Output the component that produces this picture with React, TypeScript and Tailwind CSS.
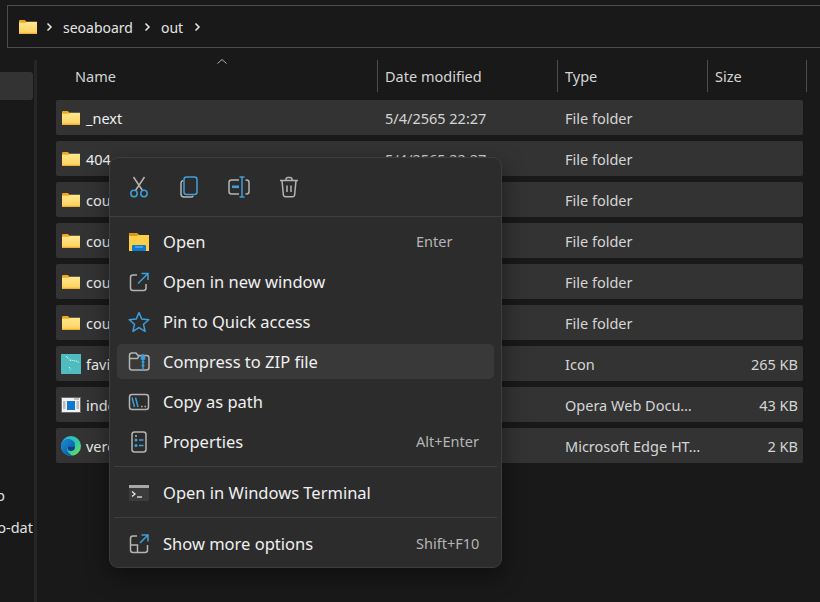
import type { ReactNode } from "react";

const BLUE = "#3f9fd8";
const GREY = "#b4b4b4";

function Folder() {
  return (
    <svg width="18" height="14" viewBox="0 0 20 16" preserveAspectRatio="none" className="shrink-0">
      <defs>
        <linearGradient id="fld" x1="0" y1="0" x2="0" y2="1">
          <stop offset="0" stopColor="#ffe88f" />
          <stop offset="1" stopColor="#fdd05a" />
        </linearGradient>
      </defs>
      <path d="M0 1.5C0 .7.6 0 1.4 0h5l2.4 2.2H20V5H0z" fill="#f2a81d" />
      <path d="M0 3.2h7.2l2-1.2H20v13c0 .6-.4 1-1 1H1c-.6 0-1-.4-1-1z" fill="url(#fld)" />
      <path d="M0 14.6h20V15c0 .6-.4 1-1 1H1c-.6 0-1-.4-1-1z" fill="#f0b132" />
    </svg>
  );
}

function Chevron({ className }: { className: string }) {
  return (
    <svg width="8" height="10" viewBox="0 0 8 10" fill="none" stroke="#e8e8e8" strokeWidth="1.5" className={`shrink-0 ${className}`}>
      <path d="M2.5 1.5L6 5 2.5 8.5" />
    </svg>
  );
}

function FaviconIcon() {
  return (
    <svg width="20" height="20" viewBox="0 0 20 20" className="shrink-0">
      <rect width="20" height="20" fill="#4fbcc0" />
      <path d="M5 2l1 1.500 2 1 1.500 1.500 2.500.5 3 .5 2 .5.5 1.500M9 6l1 1.500M8 13l1 1.500 1 1.500" stroke="#fff" strokeWidth="1" strokeDasharray="1 1" fill="none" />
    </svg>
  );
}

function DocIcon() {
  return (
    <svg width="20" height="16" viewBox="0 0 20 16" className="shrink-0">
      <rect x="0.5" y="0.5" width="19" height="15" fill="#f2f2f2" stroke="#6a6a6a" />
      <rect x="6" y="4" width="8" height="9" fill="#0f78d0" />
      <path d="M2 5h2.500M2 7h2.500M2 9h2.500M2 11h2.500M15.500 5h2.500M15.500 7h2.500M15.500 9h2.500M15.500 11h2.500M13 2h5" stroke="#8a8a8a" strokeWidth="1" />
    </svg>
  );
}

function EdgeIcon() {
  return (
    <svg width="20" height="20" viewBox="0 0 20 20" className="shrink-0">
      <defs>
        <linearGradient id="edgeA" x1="0" y1="0" x2="1" y2="1">
          <stop offset="0" stopColor="#2bb5e0" />
          <stop offset="0.55" stopColor="#30c9a5" />
          <stop offset="1" stopColor="#7fe04f" />
        </linearGradient>
        <linearGradient id="edgeB" x1="0" y1="0" x2="1" y2="1">
          <stop offset="0" stopColor="#1a8fd8" />
          <stop offset="1" stopColor="#0c4f9e" />
        </linearGradient>
      </defs>
      <circle cx="10" cy="10" r="10" fill="url(#edgeA)" />
      <path d="M0 10C0 5.500 3.500 3 7 3c4 0 7 2.500 7 5.500 0 1.200-1 2-2.500 2-1.700 0-3-.6-4.200-.2C5.800 10.800 5.500 13 6.500 15c1 2 3 3.800 5.500 4.800-.6.100-1.300.2-2 .2C4.500 20 0 15.500 0 10z" fill="url(#edgeB)" />
      <path d="M7.300 10.300c1.200-.4 2.500.2 4.200.2 1 0 1.700-.3 2.200-.9C14.500 13 13 15 10.500 15c-2 0-3.800-.8-4-2.300-.1-1 .2-1.900.8-2.400z" fill="#0b3f86" />
    </svg>
  );
}

function Cut() {
  return (
    <svg width="24" height="24" viewBox="0 0 24 24" fill="none" strokeWidth="1.5">
      <path d="M6.500 2l9 13.500M17.500 2l-9 13.500" stroke={GREY} />
      <circle cx="7" cy="18.500" r="3.200" stroke={BLUE} />
      <circle cx="17" cy="18.500" r="3.200" stroke={BLUE} />
    </svg>
  );
}

function Copy() {
  return (
    <svg width="24" height="24" viewBox="0 0 24 24" fill="none" strokeWidth="1.5">
      <path d="M6 5.500C4.800 6 4 7 4 8.200V19c0 1.700 1.300 3 3 3h7c1 0 1.800-.4 2.300-1.200" stroke={GREY} />
      <rect x="7" y="2" width="13" height="17.500" rx="2.500" stroke={BLUE} />
    </svg>
  );
}

function Rename() {
  return (
    <svg width="24" height="24" viewBox="0 0 24 24" fill="none" strokeWidth="1.5">
      <path d="M12 5H4.500C3 5 2 6 2 7.500v9C2 18 3 19 4.500 19H12M18.500 5h1C21 5 22 6 22 7.500v9c0 1.500-1 2.500-2.500 2.500h-1" stroke={GREY} />
      <path d="M12.500 2h5M15 2v20M12.500 22h5" stroke={BLUE} />
      <rect x="5" y="10.500" width="7" height="2.600" fill={BLUE} stroke="none" />
    </svg>
  );
}

function Trash() {
  return (
    <svg width="24" height="24" viewBox="0 0 24 24" fill="none" strokeWidth="1.5" stroke={GREY}>
      <path d="M3 5.500h18M9 5.500V4.500C9 3.400 9.900 2.500 11 2.500h2c1.100 0 2 .9 2 2v1M5 5.500l1.300 14c.1 1.300 1.200 2.300 2.500 2.300h6.400c1.300 0 2.400-1 2.500-2.300L19 5.500M10 10.500v6.500M14 10.500v6.500" />
    </svg>
  );
}

function OpenFolder() {
  return (
    <svg width="20" height="18" viewBox="0 0 20 18">
      <path d="M0 0h8l2.500 2H20v5H0z" fill="#d99a17" />
      <path d="M0 3h7.500L10 2h10v16H0z" fill="#fbcf47" />
      <rect x="3" y="12" width="14" height="6" rx="1" fill="#0f78d0" />
      <rect x="6" y="13.500" width="8" height="1" fill="#7cc4ee" />
    </svg>
  );
}

function NewWindow() {
  return (
    <svg width="24" height="24" viewBox="0 0 24 24" fill="none" strokeWidth="1.5">
      <path d="M10 5H6C4.600 5 3.500 6.100 3.500 7.500V18c0 1.400 1.100 2.500 2.500 2.500h10.500c1.400 0 2.500-1.100 2.500-2.500v-4" stroke={GREY} />
      <path d="M14.500 3.500h6.500v6.500M20.500 4L11 13.500" stroke={BLUE} />
    </svg>
  );
}

function Star() {
  return (
    <svg width="24" height="24" viewBox="0 0 24 24" fill="none" stroke={BLUE} strokeWidth="1.5" strokeLinejoin="round">
      <path d="M12 2.500l2.800 6.600 7 .6-5.300 4.600 1.600 7-6.100-3.700-6.100 3.700 1.600-7L2.200 9.700l7-.6z" />
    </svg>
  );
}

function Zip() {
  return (
    <svg width="24" height="24" viewBox="0 0 24 24" fill="none" strokeWidth="1.5">
      <path d="M2.500 5.500C2.500 4 3.500 3 5 3h4l2 2.500h8.500C21 5.500 22 6.500 22 8v9.500c0 1.500-1 2.500-2.500 2.500H5c-1.500 0-2.500-1-2.500-2.500zM2.500 8.500h8L12 6" stroke={GREY} />
      <path d="M16 4v16M14.500 6h3v3h-3zM14.500 12h3M14.500 15.500h3" stroke={BLUE} />
    </svg>
  );
}

function Path() {
  return (
    <svg width="24" height="24" viewBox="0 0 24 24" fill="none" strokeWidth="1.5">
      <rect x="2.500" y="4.500" width="19" height="15" rx="2.500" stroke={GREY} />
      <path d="M5 7.500l2.500 9.500M8.500 7.500L11 17" stroke={BLUE} />
      <path d="M14 16.500h1.500M17.500 16.500H19" stroke={GREY} />
    </svg>
  );
}

function Props() {
  return (
    <svg width="24" height="24" viewBox="0 0 24 24" fill="none" strokeWidth="1.5">
      <rect x="5" y="2" width="14" height="20" rx="2.500" stroke={GREY} />
      <circle cx="9" cy="10" r="1.500" fill={BLUE} />
      <circle cx="9" cy="15.500" r="1.500" fill={BLUE} />
      <path d="M12 10h4.500M12 15.500h4.500" stroke={BLUE} />
      <path d="M8 6h2" stroke={GREY} />
    </svg>
  );
}

function Terminal() {
  return (
    <svg width="20" height="16" viewBox="0 0 20 16">
      <rect width="20" height="16" fill="#3c3c3c" />
      <rect width="20" height="3" fill="#a8a8a8" />
      <path d="M3 6.500l3 2.500-3 2.500" stroke="#e8e8e8" strokeWidth="1.300" fill="none" />
      <path d="M8 12h5" stroke="#e8e8e8" strokeWidth="1.300" />
    </svg>
  );
}

function MoreOptions() {
  return (
    <svg width="24" height="24" viewBox="0 0 24 24" fill="none" strokeWidth="1.5">
      <path d="M10 4H6C4.600 4 3.500 5.100 3.500 6.500V18c0 1.400 1.100 2.500 2.500 2.500h12c1.400 0 2.500-1.100 2.500-2.500v-5M3.500 13h7v7.500" stroke={GREY} />
      <path d="M14.500 3h6.500v6.500M20.500 3.500L13 11" stroke={BLUE} />
    </svg>
  );
}

const rows: { icon: ReactNode; name: string; date: string; type: string; size: string }[] = [
  { icon: <Folder />, name: "_next", date: "5/4/2565 22:27", type: "File folder", size: "" },
  { icon: <Folder />, name: "404", date: "5/4/2565 22:27", type: "File folder", size: "" },
  { icon: <Folder />, name: "countries", date: "5/4/2565 22:27", type: "File folder", size: "" },
  { icon: <Folder />, name: "countries-data", date: "5/4/2565 22:27", type: "File folder", size: "" },
  { icon: <Folder />, name: "country", date: "5/4/2565 22:27", type: "File folder", size: "" },
  { icon: <Folder />, name: "country-data", date: "5/4/2565 22:27", type: "File folder", size: "" },
  { icon: <FaviconIcon />, name: "favicon.ico", date: "5/4/2565 22:27", type: "Icon", size: "265 KB" },
  { icon: <DocIcon />, name: "index.html", date: "5/4/2565 22:27", type: "Opera Web Docu…", size: "43 KB" },
  { icon: <EdgeIcon />, name: "vercel.svg", date: "5/4/2565 22:27", type: "Microsoft Edge HT…", size: "2 KB" },
];

function MenuItem({ icon, label, shortcut, active }: { icon: ReactNode; label: string; shortcut?: string; active?: boolean }) {
  return (
    <div className={`grid grid-cols-[46px_253px_1fr] items-center h-[35px] rounded-[5px] mx-[7px] ${active ? "bg-[#393939]" : ""}`}>
      <div className="flex items-center justify-center w-[44px]">{icon}</div>
      <span className="text-[16.5px] text-[#f0f0f0] mt-[2px]">{label}</span>
      {shortcut && <span className="text-[14.5px] text-[#b5b5b5]">{shortcut}</span>}
    </div>
  );
}

function ToolButton({ children }: { children: ReactNode }) {
  return <div className="w-[50px] flex items-center justify-center">{children}</div>;
}

export default function App() {
  return (
    <div className="relative w-[820px] h-[602px] overflow-hidden bg-[#191919] text-[#e4e4e4] font-['Noto_Sans',sans-serif]">
      <div className="flex items-center h-[43px] mt-[5px] ml-[7px] -mr-[10px] border border-[#4d4d4d] pl-[11px]">
        <Folder />
        <Chevron className="ml-[8px]" />
        <span className="ml-[10px] text-[14px] mt-[1px]">seoaboard</span>
        <Chevron className="ml-[10px]" />
        <span className="ml-[10px] text-[14px] mt-[1px]">out</span>
        <Chevron className="ml-[10px]" />
      </div>

      <div className="flex h-[554px]">
        <aside className="w-[37px] shrink-0 border-r-[3px] border-[#262626] mt-[12px] overflow-hidden flex flex-col">
          <div className="h-[28px] w-[33px] mt-[12px] bg-[#333333] rounded-r-[3px]" />
          <div className="mt-[385px] w-[5px] flex justify-end overflow-hidden">
            <span className="text-[14.5px] whitespace-nowrap text-[#e0e0e0]">app</span>
          </div>
          <div className="mt-[10px] w-[33px] flex justify-end overflow-hidden">
            <span className="text-[14.5px] whitespace-nowrap text-[#e0e0e0]">seo-dat</span>
          </div>
        </aside>

        <main className="pl-[19px] pt-[12px] relative">
          <div className="grid grid-cols-[329px_180px_150px_92px] h-[32px] items-center text-[14.5px] text-[#d5d5d5]">
            <div className="pl-[19px] pt-[2px] relative">
              Name
              <svg width="12" height="7" viewBox="0 0 12 7" className="absolute left-[160px] -top-[6px]" fill="none" stroke="#b0b0b0">
                <path d="M1.500 5.500L6 1.500l4.500 4" />
              </svg>
            </div>
            <div className="border-l border-[#4d4d4d] h-[32px] -ml-[8px] pl-[7px] pt-[2px] flex items-center">Date modified</div>
            <div className="border-l border-[#4d4d4d] h-[32px] -ml-[8px] pl-[7px] pt-[2px] flex items-center">Type</div>
            <div className="border-l border-[#4d4d4d] border-r h-[32px] -ml-[8px] pl-[7px] pt-[2px] flex items-center">Size</div>
          </div>
          <div className="mt-[8px] flex flex-col gap-[6px] w-[747px]">
            {rows.map((r) => (
              <div key={r.name} className="grid grid-cols-[329px_180px_150px_1fr] items-center h-[35px] bg-[#333333] rounded-[2px] text-[14.5px] pr-[5px]">
                <div className="flex items-center gap-[5px] pl-[5px]">
                  <div className="w-[20px] flex justify-center">{r.icon}</div>
                  <span className="text-[#f0f0f0] mt-[2px]">{r.name}</span>
                </div>
                <span className="text-[#d5d5d5] mt-[2px]">{r.date}</span>
                <span className="text-[#d5d5d5] whitespace-nowrap mt-[2px]">{r.type}</span>
                <span className="text-[#d5d5d5] text-right mt-[2px]">{r.size}</span>
              </div>
            ))}
          </div>
        </main>
      </div>

      <div className="absolute left-[109px] top-[157px] w-[393px] h-[411px] rounded-[9px] border border-[#3d3d3d] bg-[#2c2c2c] shadow-[0_8px_24px_rgba(0,0,0,0.45)]">
        <div className="flex items-center h-[59px] px-[4px] border-b border-[#3f3f3f]">
          <ToolButton><Cut /></ToolButton>
          <ToolButton><Copy /></ToolButton>
          <ToolButton><Rename /></ToolButton>
          <ToolButton><Trash /></ToolButton>
        </div>
        <div className="flex flex-col gap-[5px] pt-[7px]">
          <MenuItem icon={<OpenFolder />} label="Open" shortcut="Enter" />
          <MenuItem icon={<NewWindow />} label="Open in new window" />
          <MenuItem icon={<Star />} label="Pin to Quick access" />
          <MenuItem icon={<Zip />} label="Compress to ZIP file" active />
          <MenuItem icon={<Path />} label="Copy as path" />
          <MenuItem icon={<Props />} label="Properties" shortcut="Alt+Enter" />
        </div>
        <div className="h-px bg-[#3f3f3f] mx-[4px] mt-[7px] mb-[8px]" />
        <MenuItem icon={<Terminal />} label="Open in Windows Terminal" />
        <div className="h-px bg-[#3f3f3f] mx-[4px] mt-[7px] mb-[8px]" />
        <MenuItem icon={<MoreOptions />} label="Show more options" shortcut="Shift+F10" />
      </div>
    </div>
  );
}
